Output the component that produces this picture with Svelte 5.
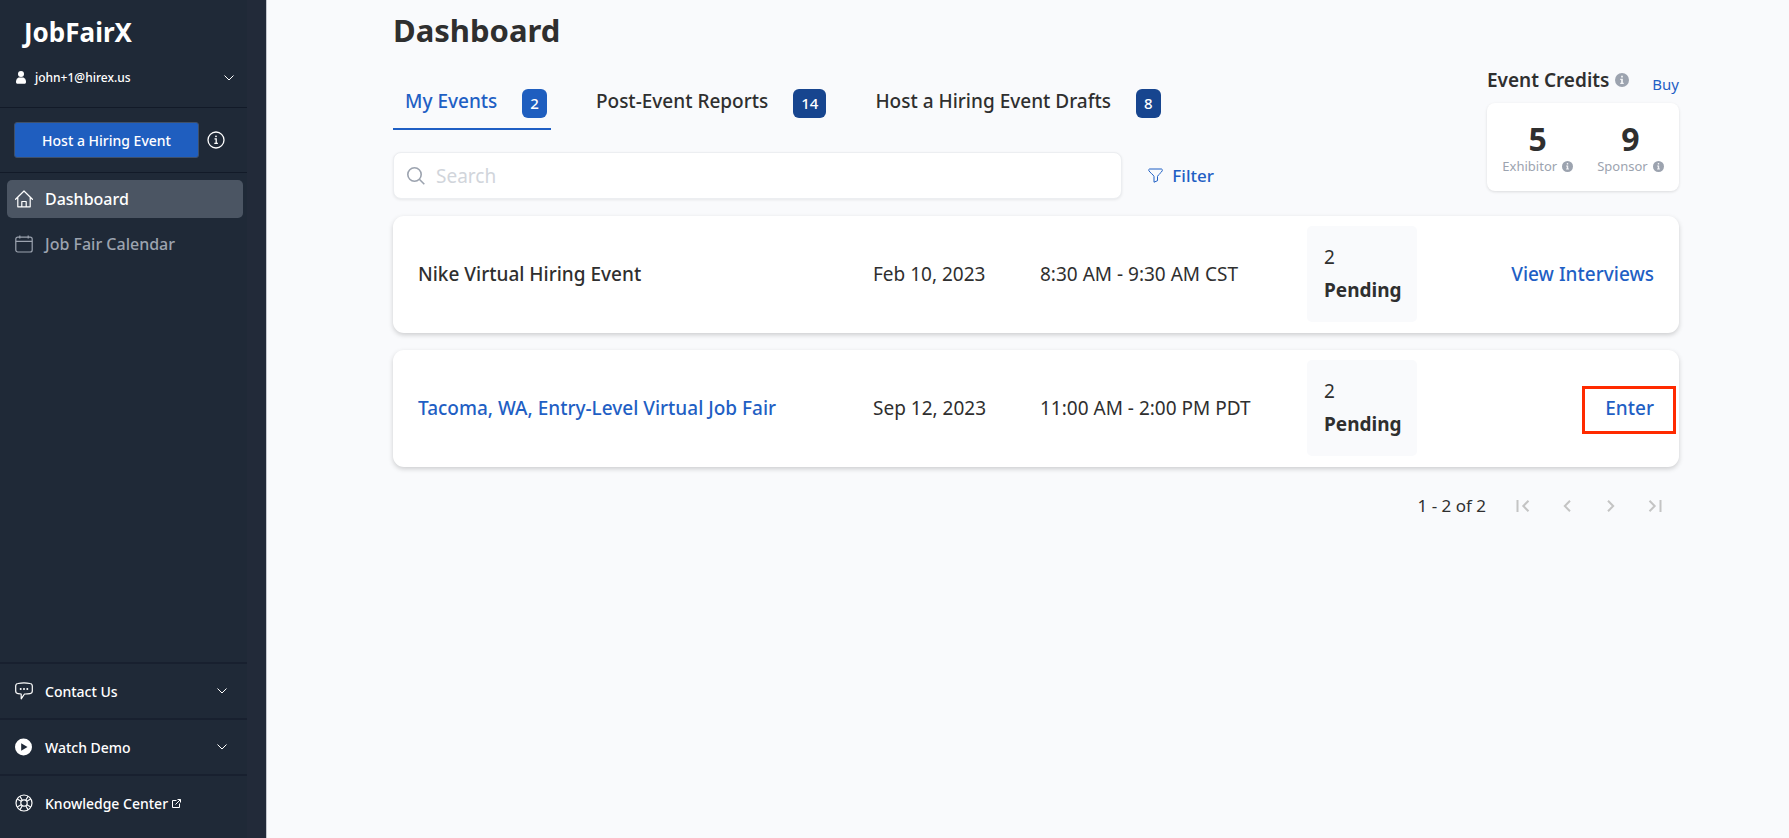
<script>
    const tabs = [
        { label: "My Events", count: 2 },
        { label: "Post-Event Reports", count: 14 },
        { label: "Host a Hiring Event Drafts", count: 8 }
    ];

    const events = [
        {
            name: "Nike Virtual Hiring Event",
            date: "Feb 10, 2023",
            time: "8:30 AM - 9:30 AM CST",
            pending: 2,
            action: "View Interviews"
        },
        {
            name: "Tacoma, WA, Entry-Level Virtual Job Fair",
            date: "Sep 12, 2023",
            time: "11:00 AM - 2:00 PM PDT",
            pending: 2,
            action: "Enter",
            link: true,
            marked: true
        }
    ];

    const credits = [
        { label: "Exhibitor", amount: 5 },
        { label: "Sponsor", amount: 9 }
    ];

    let active = $state(0);
    let search = $state("");
</script>

{#snippet chevron()}
    <svg class="chevron" viewBox="0 0 10 6" width="10" height="6" fill="none" stroke="currentColor">
        <path d="M.5 .5 5 5 9.5 .5" />
    </svg>
{/snippet}

{#snippet info(size)}
    <svg viewBox="0 0 16 16" width={size} height={size}>
        <circle cx="8" cy="8" r="8" fill="#9ca3af" />
        <path d="M7 3h2v2.200H7zM6 6.500h3v4.500h1v1.500H6V11h1V8H6z" fill="#f3f4f6" />
    </svg>
{/snippet}

<div class="layout">
    <aside class="sidebar">
        <div class="inner">
            <div class="logo">JobFairX</div>
            <button class="account">
                <svg viewBox="0 0 10 13" width="10" height="13" fill="#fff">
                    <circle cx="5" cy="3" r="3" />
                    <path d="M2.500 6.500h5C9.500 7.500 10 9.500 10 11c0 1.500-1 1.800-2 1.800H2c-1 0-2-.3-2-1.800 0-1.500.5-3.500 2.500-4.500z" />
                </svg>
                <span>john+1@hirex.us</span>
                {@render chevron()}
            </button>

            <div class="host">
                <button class="primary">Host a Hiring Event</button>
                <button class="plain" aria-label="About hosting">
                    <svg viewBox="0 0 18 18" width="18" height="18" fill="none" stroke="#fff">
                        <circle cx="9" cy="9" r="8" stroke-width="1.300" />
                        <path d="M7.500 7.800h1.700v4.400M7.300 12.400h3.600" stroke-width="1.300" />
                        <circle cx="9" cy="5.300" r=".9" fill="#fff" stroke="none" />
                    </svg>
                </button>
            </div>

            <nav>
                <a class="current" href="#dashboard">
                    <svg viewBox="0 0 18 18" width="18" height="18" fill="none" stroke="currentColor" stroke-width="1.200">
                        <path d="M.6 9.300 9 1l8.400 8.300M2.800 7.500v9.300h12.400V7.500M6.800 16.500v-5h4.400v5" stroke-linejoin="round" stroke-linecap="round" />
                    </svg>
                    Dashboard
                </a>
                <a href="#calendar">
                    <svg viewBox="0 0 18 18" width="18" height="18" fill="none" stroke="currentColor" stroke-width="1.200">
                        <rect x=".8" y="2.200" width="16.400" height="14.800" rx="2" />
                        <path d="M.8 6.300h16.400M4.800 .5v3M13.200 .5v3" />
                    </svg>
                    Job Fair Calendar
                </a>
            </nav>

            <div class="help">
                <button>
                    <svg viewBox="0 0 18 18" width="18" height="18" fill="none" stroke="currentColor" stroke-width="1.200">
                        <path d="M3 1.500Q9 .4 15 1.500 17.300 1.800 17.300 4v5q0 2.300-2.300 2.600-3 .5-5.500.4L6.200 16.800V12L3 11.600Q.7 11.300 .7 9V4Q.7 1.800 3 1.500z" stroke-linejoin="round" />
                        <g fill="currentColor" stroke="none">
                            <circle cx="5.700" cy="7" r="1" />
                            <circle cx="9" cy="7" r="1" />
                            <circle cx="12.300" cy="7" r="1" />
                        </g>
                    </svg>
                    Contact Us
                    {@render chevron()}
                </button>
                <button>
                    <svg viewBox="0 0 18 18" width="18" height="18">
                        <circle cx="8.500" cy="9" r="8.500" fill="#fff" />
                        <path d="M6.200 5.300v7.400L12.500 9z" fill="#1f2937" />
                    </svg>
                    Watch Demo
                    {@render chevron()}
                </button>
                <a href="#knowledge">
                    <svg viewBox="0 0 18 18" width="18" height="18" fill="none" stroke="currentColor" stroke-width="1.200">
                        <circle cx="9" cy="9" r="8" />
                        <circle cx="9" cy="9" r="3.200" />
                        <path d="M5 2.200 7.200 6.200M13 2.200l-2.200 4M5 15.800l2.200-4M13 15.800l-2.200-4M2.200 5l4 2.200M2.200 13l4-2.200M15.800 5l-4 2.200M15.800 13l-4-2.200" />
                    </svg>
                    <span class="external">
                        Knowledge Center
                        <svg viewBox="0 0 9 9" width="9" height="9" fill="none" stroke="currentColor">
                            <path d="M4.500 1.500h-4v7h7v-4M3.500 5.500l5-5M5.500 .5h3v3" />
                        </svg>
                    </span>
                </a>
            </div>
        </div>
    </aside>

    <main>
        <h1>Dashboard</h1>
        <header>
            <div class="controls">
                <div class="tabs" role="tablist">
                    {#each tabs as tab, i}
                        <button role="tab" aria-selected={active === i} class:active={active === i} onclick={() => (active = i)}>
                            <span>{tab.label}</span>
                            <span class="count">{tab.count}</span>
                        </button>
                    {/each}
                </div>

                <div class="tools">
                    <label class="search">
                        <svg viewBox="0 0 18 18" width="18" height="18" fill="none" stroke="#9ca3af" stroke-width="1.600">
                            <circle cx="7.500" cy="7.500" r="6.700" />
                            <path d="m12.300 12.300 5 5" />
                        </svg>
                        <input type="text" placeholder="Search" aria-label="Search" bind:value={search} />
                    </label>
                    <button class="filter">
                        <svg viewBox="0 0 15 15" width="15" height="15" fill="none" stroke="currentColor">
                            <path d="M1.500 1h12q1 .2.800 1.500C13.500 5 10 6.500 9.500 8.500v4.200L6 14.200V8.500C5.500 6.500 2 5 .8 2.500Q.5 1.200 1.500 1z" stroke-linejoin="round" />
                        </svg>
                        Filter
                    </button>
                </div>
            </div>

            <section class="credits">
                <div class="credits-head">
                    <h2>Event Credits</h2>
                    {@render info(14)}
                    <a href="#buy">Buy</a>
                </div>
                <div class="credits-card">
                    {#each credits as credit}
                        <div class="credit">
                            <strong>{credit.amount}</strong>
                            <span>{credit.label} {@render info(11)}</span>
                        </div>
                    {/each}
                </div>
            </section>
        </header>

        <table>
            <tbody>
                {#each events as event}
                    <tr>
                        <td class="name">
                            {#if event.link}
                                <a href="#event">{event.name}</a>
                            {:else}
                                {event.name}
                            {/if}
                        </td>
                        <td>{event.date}</td>
                        <td>{event.time}</td>
                        <td class="status">{event.pending}<br /><b>Pending</b></td>
                        <td class="action">
                            <a href="#open" class:marked={event.marked}>{event.action}</a>
                        </td>
                    </tr>
                {/each}
            </tbody>
        </table>

        <div class="pager">
            <span>1 - 2 of 2</span>
            <button aria-label="First page" disabled>
                <svg viewBox="0 0 14 12" width="14" height="12"><path d="M1.500 0v12M12.500 .7 7.300 6l5.200 5.300" /></svg>
            </button>
            <button aria-label="Previous page" disabled>
                <svg viewBox="0 0 14 12" width="14" height="12"><path d="M10 .7 4.800 6l5.200 5.300" /></svg>
            </button>
            <button aria-label="Next page" disabled>
                <svg viewBox="0 0 14 12" width="14" height="12"><path d="M4 .7 9.200 6 4 11.300" /></svg>
            </button>
            <button aria-label="Last page" disabled>
                <svg viewBox="0 0 14 12" width="14" height="12"><path d="M12.500 0v12M1.500 .7 6.700 6l-5.200 5.300" /></svg>
            </button>
        </div>
    </main>
</div>

<style>
    :global(body) {
        font-family: "Noto Sans", sans-serif;
        background: #f9fafc;
        color: #2f2f2f;
    }

    button {
        font: inherit;
        color: inherit;
        background: none;
        border: 0;
        padding: 0;
        cursor: pointer;
    }

    a {
        color: #1f5fc4;
        text-decoration: none;
    }

    svg {
        flex: none;
        display: block;
    }

    .layout {
        display: flex;
        min-height: 100vh;
    }

    .sidebar {
        width: 266px;
        flex: none;
        background: #222a39;
        border-right: 1px solid #c3c7ce;
        color: #fff;
        display: flex;
    }

    .inner {
        width: 247px;
        background: #1f2937;
        display: flex;
        flex-direction: column;
    }

    .logo {
        font-size: 26px;
        font-weight: 700;
        line-height: 36px;
        padding: 14px 24px 0;
    }

    .account {
        display: flex;
        align-items: center;
        gap: 9px;
        height: 58px;
        padding: 0 13px 2px 16px;
        font-size: 12px;
        font-weight: 500;
        border-bottom: 1px solid #121a28;
    }

    .chevron {
        margin-left: auto;
    }

    .host {
        display: flex;
        align-items: center;
        gap: 8px;
        padding: 14px;
        border-bottom: 1px solid #121a28;
    }

    .primary {
        width: 185px;
        height: 36px;
        border: 1px solid #3f5069;
        border-radius: 3px;
        background: #1f5ebf;
        font-size: 14px;
        font-weight: 500;
    }

    nav {
        display: flex;
        flex-direction: column;
        gap: 7px;
        padding: 7px 4px 0 7px;
    }

    nav a {
        display: flex;
        align-items: center;
        gap: 12px;
        height: 38px;
        padding: 0 8px;
        border-radius: 5px;
        font-size: 16px;
        font-weight: 500;
        color: #9ca3af;
    }

    nav .current {
        background: #4b5563;
        color: #fff;
    }

    .help {
        margin-top: auto;
        padding-bottom: 8px;
    }

    .help > * {
        display: flex;
        align-items: center;
        gap: 12px;
        box-sizing: border-box;
        width: 100%;
        height: 56px;
        padding: 0 20px 0 15px;
        border-top: 2px solid #18202f;
        font-size: 14px;
        font-weight: 500;
        color: #fff;
    }

    .external {
        display: flex;
        align-items: center;
        gap: 4px;
    }

    main {
        flex: 1;
        padding: 8px 110px 0 126px;
    }

    h1 {
        margin: 0;
        font-size: 31px;
        font-weight: 700;
        line-height: 44px;
    }

    header {
        display: flex;
        align-items: flex-start;
        justify-content: space-between;
    }

    .controls {
        flex: 1;
        padding-top: 26px;
    }

    .tabs {
        display: flex;
        gap: 33px;
    }

    .tabs button {
        display: flex;
        align-items: flex-start;
        gap: 25px;
        height: 52px;
        box-sizing: border-box;
        padding: 10px 4px 0 12px;
        border-bottom: 2px solid transparent;
        font-size: 19px;
        font-weight: 500;
        line-height: 26px;
    }

    .tabs .active {
        color: #1f5fc4;
        border-bottom-color: #1f5fc4;
    }

    .count {
        margin-top: 1px;
        padding: 0 8px;
        border-radius: 6px;
        background: #17458f;
        color: #fff;
        font-size: 15px;
        line-height: 29px;
    }

    .active .count {
        background: #1f5ebf;
    }

    .tools {
        display: flex;
        align-items: center;
        gap: 26px;
        margin-top: 22px;
    }

    .search {
        display: flex;
        align-items: center;
        gap: 11px;
        box-sizing: border-box;
        width: calc(200% / 3);
        height: 47px;
        padding: 0 13px;
        background: #fff;
        border: 1px solid #eceef1;
        border-radius: 8px;
        box-shadow: 0 1px 3px rgba(0, 0, 0, 0.08);
    }

    .search input {
        flex: 1;
        min-width: 0;
        border: 0;
        padding: 0;
        outline: 0;
        background: none;
        font: inherit;
        font-size: 19px;
    }

    .search input::placeholder {
        color: #d1d5db;
    }

    .filter {
        display: flex;
        align-items: center;
        gap: 9px;
        font-size: 17px;
        font-weight: 500;
        color: #1f5fc4;
    }

    .credits {
        width: 192px;
        padding-top: 15px;
    }

    .credits-head {
        display: flex;
        align-items: center;
        gap: 6px;
        height: 26px;
        margin-bottom: 10px;
    }

    h2 {
        margin: 0;
        font-size: 19px;
        font-weight: 600;
    }

    .credits-head a {
        margin: 8px 0 0 auto;
        font-size: 15px;
    }

    .credits-card {
        display: flex;
        justify-content: center;
        gap: 24px;
        height: 88px;
        box-sizing: border-box;
        padding-top: 16px;
        background: #fff;
        border-radius: 8px;
        box-shadow: 0 1px 3px rgba(0, 0, 0, 0.12);
    }

    .credit {
        display: flex;
        flex-direction: column;
        align-items: center;
    }

    .credit strong {
        font-size: 32px;
        line-height: 39px;
    }

    .credit span {
        display: flex;
        align-items: center;
        gap: 5px;
        font-size: 13px;
        line-height: 16px;
        color: #9ca3af;
    }

    table,
    tbody {
        display: flex;
        flex-direction: column;
        gap: 17px;
    }

    table {
        margin-top: 17px;
        font-size: 19px;
    }

    tr {
        display: grid;
        grid-template-columns: 455fr 167fr 267fr 110px 237fr;
        align-items: center;
        padding: 10px 25px 11px;
        background: #fff;
        border-radius: 11px;
        box-shadow: 0 2px 5px rgba(0, 0, 0, 0.18);
    }

    td {
        padding: 0;
    }

    .name,
    .action {
        font-weight: 500;
    }

    .status {
        padding: 15px 17px;
        background: #f9fafc;
        border-radius: 5px;
        line-height: 33px;
    }

    .action {
        text-align: right;
    }

    .marked {
        position: relative;
    }

    /* callout drawn round the link */
    .marked::after {
        content: "";
        position: absolute;
        inset: -9px -22px -13px -23px;
        border: 3px solid #ff2a00;
    }

    .pager {
        display: flex;
        align-items: center;
        justify-content: flex-end;
        gap: 30px;
        padding: 26px 17px 0 0;
        font-size: 17px;
        line-height: 26px;
    }

    .pager svg {
        fill: none;
        stroke: #c4c4c4;
        stroke-width: 2px;
    }
</style>
